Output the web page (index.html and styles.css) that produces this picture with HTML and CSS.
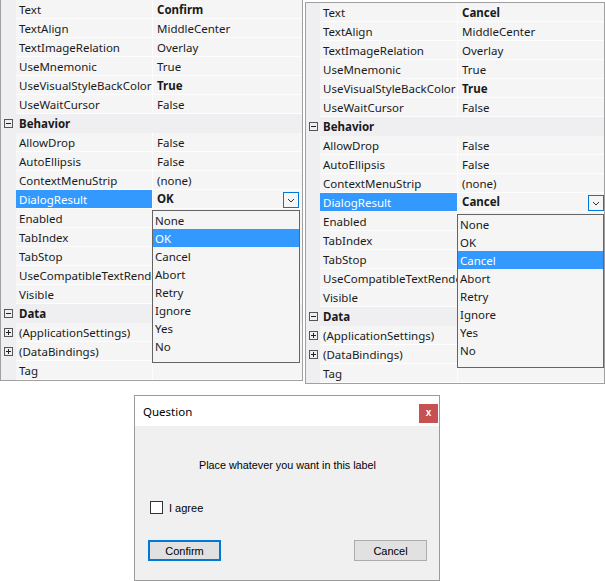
FILE: index.html
```html
<!DOCTYPE html>
<html lang="en">

<head>
  <meta charset="UTF-8">
  <meta name="viewport" content="width=device-width, initial-scale=1.0">
  <title>DialogResult properties</title>
  <link rel="stylesheet" href="styles.css">
</head>

<body>
  <div class="panels">
    <div class="grid grid-left">
      <div class="row"><span class="gut"></span><span class="name">Text</span><span class="val b">Confirm</span></div>
      <div class="row"><span class="gut"></span><span class="name">TextAlign</span><span class="val">MiddleCenter</span></div>
      <div class="row"><span class="gut"></span><span class="name">TextImageRelation</span><span class="val">Overlay</span></div>
      <div class="row"><span class="gut"></span><span class="name">UseMnemonic</span><span class="val">True</span></div>
      <div class="row"><span class="gut"></span><span class="name">UseVisualStyleBackColor</span><span class="val b">True</span></div>
      <div class="row"><span class="gut"></span><span class="name">UseWaitCursor</span><span class="val">False</span></div>
      <div class="row cat">
        <span class="gut"><svg width="9" height="9" viewBox="0 0 9 9"><rect x="0.5" y="0.5" width="8" height="8" fill="none" stroke="#555"/><path d="M2 4.5h5" stroke="#222"/></svg></span>
        <span class="name">Behavior</span><span class="val"></span>
      </div>
      <div class="row"><span class="gut"></span><span class="name">AllowDrop</span><span class="val">False</span></div>
      <div class="row"><span class="gut"></span><span class="name">AutoEllipsis</span><span class="val">False</span></div>
      <div class="row"><span class="gut"></span><span class="name">ContextMenuStrip</span><span class="val">(none)</span></div>
      <div class="row sel">
        <span class="gut"></span><span class="name">DialogResult</span>
        <span class="val b">OK
          <span class="drop-btn"><svg width="8" height="5" viewBox="0 0 8 5"><path d="M1 1l3 3l3-3" fill="none" stroke="#333"/></svg></span>
        </span>
      </div>
      <div class="row"><span class="gut"></span><span class="name">Enabled</span><span class="val">True</span></div>
      <div class="row"><span class="gut"></span><span class="name">TabIndex</span><span class="val">0</span></div>
      <div class="row"><span class="gut"></span><span class="name">TabStop</span><span class="val">True</span></div>
      <div class="row"><span class="gut"></span><span class="name">UseCompatibleTextRendering</span><span class="val">False</span></div>
      <div class="row"><span class="gut"></span><span class="name">Visible</span><span class="val">True</span></div>
      <div class="row cat">
        <span class="gut"><svg width="9" height="9" viewBox="0 0 9 9"><rect x="0.5" y="0.5" width="8" height="8" fill="none" stroke="#555"/><path d="M2 4.5h5" stroke="#222"/></svg></span>
        <span class="name">Data</span><span class="val"></span>
      </div>
      <div class="row">
        <span class="gut"><svg width="9" height="9" viewBox="0 0 9 9"><rect x="0.5" y="0.5" width="8" height="8" fill="none" stroke="#555"/><path d="M2 4.5h5M4.5 2v5" stroke="#222"/></svg></span>
        <span class="name">(ApplicationSettings)</span><span class="val"></span>
      </div>
      <div class="row">
        <span class="gut"><svg width="9" height="9" viewBox="0 0 9 9"><rect x="0.5" y="0.5" width="8" height="8" fill="none" stroke="#555"/><path d="M2 4.5h5M4.5 2v5" stroke="#222"/></svg></span>
        <span class="name">(DataBindings)</span><span class="val"></span>
      </div>
      <div class="row"><span class="gut"></span><span class="name">Tag</span><span class="val"></span></div>

      <ul class="drop">
        <li>None</li>
        <li class="hl">OK</li>
        <li>Cancel</li>
        <li>Abort</li>
        <li>Retry</li>
        <li>Ignore</li>
        <li>Yes</li>
        <li>No</li>
      </ul>
    </div>

    <div class="grid grid-right">
      <div class="row"><span class="gut"></span><span class="name">Text</span><span class="val b">Cancel</span></div>
      <div class="row"><span class="gut"></span><span class="name">TextAlign</span><span class="val">MiddleCenter</span></div>
      <div class="row"><span class="gut"></span><span class="name">TextImageRelation</span><span class="val">Overlay</span></div>
      <div class="row"><span class="gut"></span><span class="name">UseMnemonic</span><span class="val">True</span></div>
      <div class="row"><span class="gut"></span><span class="name">UseVisualStyleBackColor</span><span class="val b">True</span></div>
      <div class="row"><span class="gut"></span><span class="name">UseWaitCursor</span><span class="val">False</span></div>
      <div class="row cat">
        <span class="gut"><svg width="9" height="9" viewBox="0 0 9 9"><rect x="0.5" y="0.5" width="8" height="8" fill="none" stroke="#555"/><path d="M2 4.5h5" stroke="#222"/></svg></span>
        <span class="name">Behavior</span><span class="val"></span>
      </div>
      <div class="row"><span class="gut"></span><span class="name">AllowDrop</span><span class="val">False</span></div>
      <div class="row"><span class="gut"></span><span class="name">AutoEllipsis</span><span class="val">False</span></div>
      <div class="row"><span class="gut"></span><span class="name">ContextMenuStrip</span><span class="val">(none)</span></div>
      <div class="row sel">
        <span class="gut"></span><span class="name">DialogResult</span>
        <span class="val b">Cancel
          <span class="drop-btn"><svg width="8" height="5" viewBox="0 0 8 5"><path d="M1 1l3 3l3-3" fill="none" stroke="#333"/></svg></span>
        </span>
      </div>
      <div class="row"><span class="gut"></span><span class="name">Enabled</span><span class="val">True</span></div>
      <div class="row"><span class="gut"></span><span class="name">TabIndex</span><span class="val">1</span></div>
      <div class="row"><span class="gut"></span><span class="name">TabStop</span><span class="val">True</span></div>
      <div class="row"><span class="gut"></span><span class="name">UseCompatibleTextRendering</span><span class="val">False</span></div>
      <div class="row"><span class="gut"></span><span class="name">Visible</span><span class="val">True</span></div>
      <div class="row cat">
        <span class="gut"><svg width="9" height="9" viewBox="0 0 9 9"><rect x="0.5" y="0.5" width="8" height="8" fill="none" stroke="#555"/><path d="M2 4.5h5" stroke="#222"/></svg></span>
        <span class="name">Data</span><span class="val"></span>
      </div>
      <div class="row">
        <span class="gut"><svg width="9" height="9" viewBox="0 0 9 9"><rect x="0.5" y="0.5" width="8" height="8" fill="none" stroke="#555"/><path d="M2 4.5h5M4.5 2v5" stroke="#222"/></svg></span>
        <span class="name">(ApplicationSettings)</span><span class="val"></span>
      </div>
      <div class="row">
        <span class="gut"><svg width="9" height="9" viewBox="0 0 9 9"><rect x="0.5" y="0.5" width="8" height="8" fill="none" stroke="#555"/><path d="M2 4.5h5M4.5 2v5" stroke="#222"/></svg></span>
        <span class="name">(DataBindings)</span><span class="val"></span>
      </div>
      <div class="row"><span class="gut"></span><span class="name">Tag</span><span class="val"></span></div>

      <ul class="drop">
        <li>None</li>
        <li>OK</li>
        <li class="hl">Cancel</li>
        <li>Abort</li>
        <li>Retry</li>
        <li>Ignore</li>
        <li>Yes</li>
        <li>No</li>
      </ul>
    </div>
  </div>

  <div class="dialog">
    <div class="titlebar">
      <span>Question</span>
      <span class="close">x</span>
    </div>
    <div class="dlg-body">
      <div class="msg">Place whatever you want in this label</div>
      <div class="agree"><span class="box"></span><span>I agree</span></div>
      <div class="buttons">
        <button type="button" class="btn focus">Confirm</button>
        <button type="button" class="btn">Cancel</button>
      </div>
    </div>
  </div>
</body>

</html>
```

FILE: styles.css
```css
* {
  box-sizing: border-box;
}

body {
  margin: 0;
  background-color: #fff;
  font-family: "Noto Sans", sans-serif;
  font-size: 11.5px;
  color: #1a1a1a;
}

.panels {
  display: flex;
  align-items: flex-start;
  gap: 2px;
}

/* property grid */
.grid {
  position: relative;
  border: 1px solid #a0a0a0;
  background-color: #f5f5f5;
}

.grid-left {
  width: 303px;
  border-top: none;
}

.grid-right {
  width: 300px;
  margin-top: 2px;
}

.row {
  display: grid;
  grid-template-columns: 15px 137px 1fr;
  height: 19px;
  line-height: 20px;
}

.grid-right .row {
  grid-template-columns: 14px 138px 1fr;
}

.gut {
  display: flex;
  align-items: center;
  justify-content: center;
  background-color: #efeff2;
}

.name,
.val {
  white-space: nowrap;
  overflow: hidden;
  border-bottom: 1px solid #fdfdfd;
}

.name {
  padding-left: 3px;
  border-right: 1px solid #fdfdfd;
}

.val {
  padding-left: 4px;
}

.b {
  font-weight: bold;
}

.cat .name,
.cat .val {
  background-color: #efeff2;
  border-color: #efeff2;
  font-weight: bold;
}

.sel .name {
  background-color: #3399ff;
  color: #fff;
}

.sel .val {
  display: flex;
  align-items: center;
  justify-content: space-between;
  padding-right: 3px;
}

.grid-right .sel .val {
  padding-right: 0;
}

.drop-btn {
  display: flex;
  align-items: center;
  justify-content: center;
  width: 16px;
  height: 16px;
  margin-top: 2px;
  border: 1px solid #0078d7;
  background-color: #f5f5f5;
}

.drop {
  position: absolute;
  left: 151px;
  top: 210px;
  width: 148px;
  height: 153px;
  margin: 0;
  padding: 0;
  list-style: none;
  border: 1px solid #646464;
  background-color: #f5f5f5;
}

.grid-right .drop {
  top: 211px;
  width: 147px;
  height: 154px;
}

.drop li {
  height: 18px;
  line-height: 19px;
  padding-left: 2px;
  overflow: hidden;
}

.drop li.hl {
  background-color: #3399ff;
  color: #fff;
}

/* dialog */
.dialog {
  width: 306px;
  height: 186px;
  margin: 11px 0 0 134px;
  border: 1px solid #9b9b9b;
  background-color: #f0f0f0;
  font-family: "Liberation Sans", Arial, sans-serif;
  font-size: 11px;
  color: #000;
}

.titlebar {
  display: flex;
  justify-content: space-between;
  height: 30px;
  padding-left: 8px;
  background-color: #fff;
  font-family: "Noto Sans", sans-serif;
  font-size: 11.5px;
  line-height: 31px;
}

.close {
  width: 19px;
  height: 19px;
  margin: 8px 1px 0 0;
  background-color: #c75050;
  color: #fff;
  font-family: "Liberation Sans", Arial, sans-serif;
  font-size: 10px;
  font-weight: bold;
  line-height: 18px;
  text-align: center;
}

.dlg-body {
  padding: 0 12px 0 13px;
}

.msg {
  margin-top: 33px;
  line-height: 13px;
  font-size: 10.8px;
  text-align: center;
}

.agree {
  display: flex;
  align-items: center;
  gap: 6px;
  height: 13px;
  margin-top: 29px;
  padding-left: 2px;
  line-height: 12px;
}

.box {
  width: 13px;
  height: 13px;
  border: 1px solid #333;
  background-color: #fff;
}

.buttons {
  display: flex;
  justify-content: space-between;
  margin-top: 26px;
}

.btn {
  width: 73px;
  height: 21px;
  padding: 0;
  border: 1px solid #adadad;
  background-color: #e1e1e1;
  font-family: "Liberation Sans", Arial, sans-serif;
  font-size: 11px;
  color: #000;
}

.btn.focus {
  border: 2px solid #0078d7;
}
```
